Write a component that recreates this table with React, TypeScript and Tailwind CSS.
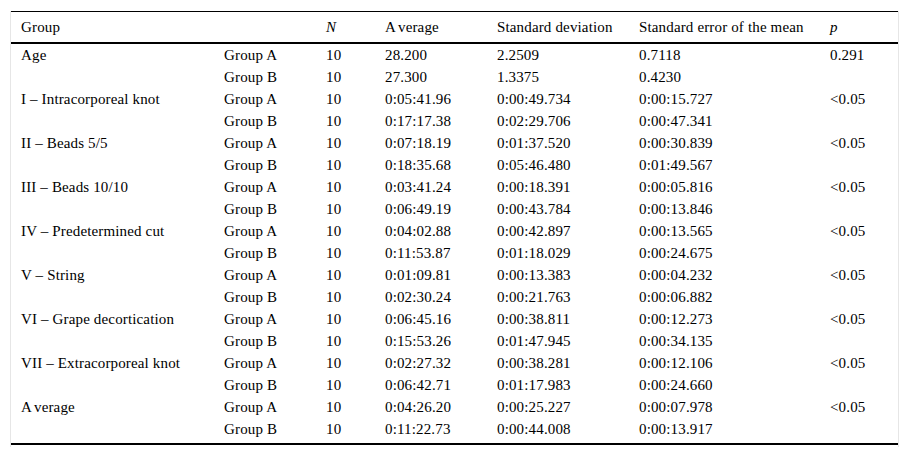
import type { ReactNode } from "react";

type Row = {
  label: ReactNode;
  a: string[];
  b: string[];
  p: string;
};

const Avg = () => (
  <>
    A<span className="ml-[2px]">verage</span>
  </>
);

const rows: Row[] = [
  { label: "Age", a: ["28.200", "2.2509", "0.7118"], b: ["27.300", "1.3375", "0.4230"], p: "0.291" },
  { label: "I – Intracorporeal knot", a: ["0:05:41.96", "0:00:49.734", "0:00:15.727"], b: ["0:17:17.38", "0:02:29.706", "0:00:47.341"], p: "<0.05" },
  { label: "II – Beads 5/5", a: ["0:07:18.19", "0:01:37.520", "0:00:30.839"], b: ["0:18:35.68", "0:05:46.480", "0:01:49.567"], p: "<0.05" },
  { label: "III – Beads 10/10", a: ["0:03:41.24", "0:00:18.391", "0:00:05.816"], b: ["0:06:49.19", "0:00:43.784", "0:00:13.846"], p: "<0.05" },
  { label: "IV – Predetermined cut", a: ["0:04:02.88", "0:00:42.897", "0:00:13.565"], b: ["0:11:53.87", "0:01:18.029", "0:00:24.675"], p: "<0.05" },
  { label: "V – String", a: ["0:01:09.81", "0:00:13.383", "0:00:04.232"], b: ["0:02:30.24", "0:00:21.763", "0:00:06.882"], p: "<0.05" },
  { label: "VI – Grape decortication", a: ["0:06:45.16", "0:00:38.811", "0:00:12.273"], b: ["0:15:53.26", "0:01:47.945", "0:00:34.135"], p: "<0.05" },
  { label: "VII – Extracorporeal knot", a: ["0:02:27.32", "0:00:38.281", "0:00:12.106"], b: ["0:06:42.71", "0:01:17.983", "0:00:24.660"], p: "<0.05" },
  { label: <Avg />, a: ["0:04:26.20", "0:00:25.227", "0:00:07.978"], b: ["0:11:22.73", "0:00:44.008", "0:00:13.917"], p: "<0.05" },
];

function DataRow({ first, group, vals, p }: { first: ReactNode; group: string; vals: string[]; p: string }) {
  return (
    <tr className="h-[22px]">
      <td className="pl-[10px]">{first}</td>
      <td className="pl-[10px]">{group}</td>
      <td className="pl-[10px]">10</td>
      <td className="pl-[10px]">{vals[0]}</td>
      <td className="pl-[10px]">{vals[1]}</td>
      <td className="pl-[10px]">{vals[2]}</td>
      <td className="pl-[10px]">{p}</td>
    </tr>
  );
}

export default function App() {
  return (
    <div className="w-[909px] h-[457px] bg-white pt-[10px] pl-[10px] font-['Liberation_Serif','Times_New_Roman',serif]">
      <div className="w-[889px] h-[436px] border-x border-[#e6e6e6] text-[15px] leading-[22px] tracking-[0.15px] text-black">
        <table className="w-[887px] table-fixed border-collapse mt-px">
          <colgroup>
            <col className="w-[203px]" />
            <col className="w-[102px]" />
            <col className="w-[59px]" />
            <col className="w-[112px]" />
            <col className="w-[142px]" />
            <col className="w-[191px]" />
            <col className="w-[78px]" />
          </colgroup>
          <thead>
            <tr className="h-[31px] border-t border-black border-b-2 text-left">
              <th className="pl-[10px] font-normal">Group</th>
              <th className="pl-[10px] font-normal"></th>
              <th className="pl-[10px] font-normal italic">N</th>
              <th className="pl-[10px] font-normal">
                <Avg />
              </th>
              <th className="pl-[10px] font-normal">Standard deviation</th>
              <th className="pl-[10px] font-normal">Standard error of the mean</th>
              <th className="pl-[10px] font-normal italic">p</th>
            </tr>
          </thead>
          <tbody className="border-b-2 border-black">
            {rows.map((r, i) => [
              <DataRow key={i + "a"} first={r.label} group="Group A" vals={r.a} p={r.p} />,
              <DataRow key={i + "b"} first="" group="Group B" vals={r.b} p="" />,
            ])}
            <tr className="h-[4px]">
              <td colSpan={7}></td>
            </tr>
          </tbody>
        </table>
      </div>
    </div>
  );
}
